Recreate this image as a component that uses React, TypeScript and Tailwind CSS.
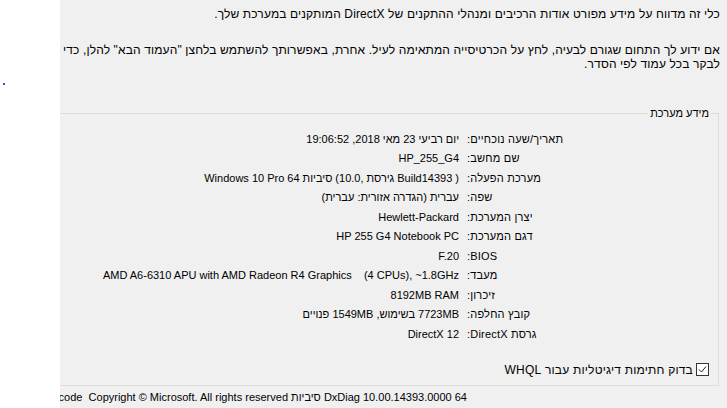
const rows: { label: string; value: React.ReactNode }[] = [
  { label: "תאריך/שעה נוכחיים:", value: "יום רביעי 23 מאי 2018, 19:06:52" },
  { label: "שם מחשב:", value: "HP_255_G4" },
  {
    label: "מערכת הפעלה:",
    value: (
      <span dir="ltr" className="inline-flex gap-[3px]">
        <span>Windows 10 Pro 64</span>
        <span>סיביות</span>
        <span>(10.0,</span>
        <span>גירסת</span>
        <span>Build14393</span>
        <span>)</span>
      </span>
    ),
  },
  { label: "שפה:", value: "עברית (הגדרה אזורית: עברית)" },
  { label: "יצרן המערכת:", value: "Hewlett-Packard" },
  { label: "דגם המערכת:", value: "HP 255 G4 Notebook PC" },
  { label: "BIOS:", value: "F.20" },
  { label: "מעבד:", value: "AMD A6-6310 APU with AMD Radeon R4 Graphics    (4 CPUs), ~1.8GHz" },
  { label: "זיכרון:", value: "8192MB RAM" },
  { label: "קובץ החלפה:", value: "7723MB בשימוש, 1549MB פנויים" },
  { label: "גרסת DirectX:", value: "DirectX 12" },
];

export default function App() {
  return (
    <div
      className="flex h-[408px] w-[727px] overflow-hidden bg-white text-[11px] text-black"
      style={{ fontFamily: '"Liberation Sans", "DejaVu Sans", sans-serif' }}
    >
      {/* white strip on the left */}
      <div className="w-[60px] shrink-0 pl-[3px] pt-[83px]">
        <div className="h-[2px] w-[2px] bg-[#3344ff]" />
      </div>

      <div dir="rtl" className="min-w-0 flex-1 overflow-hidden bg-[#f0f0f0]">
        <div className="whitespace-nowrap pr-[7px] pt-[7px] text-[12px] leading-[14px] tracking-[0.13px]">
          <p>כלי זה מדווח על מידע מפורט אודות הרכיבים ומנהלי ההתקנים של DirectX המותקנים במערכת שלך.</p>
          <p className="mt-[22px]">
            אם ידוע לך התחום שגורם לבעיה, לחץ על הכרטיסייה המתאימה לעיל. אחרת, באפשרותך להשתמש בלחצן "העמוד הבא" להלן, כדי
            <br />
            לבקר בכל עמוד לפי הסדר.
          </p>
        </div>

        {/* group box */}
        <div className="relative -ml-[30px] mr-[8px] mt-[42px] h-[273px] border border-[#dcdcdc]">
          <span className="absolute -top-[8px] right-[7px] bg-[#f0f0f0] px-[2px] leading-[14px]">מידע מערכת</span>

          <div className="pr-[143px] pt-[15px]">
            {rows.map((r) => (
              <div key={r.label} className="flex h-[19.5px] items-center whitespace-pre leading-[14px]">
                <div className="w-[108px] shrink-0 text-left tracking-[0.2px]">{r.label}</div>
                <div className="mr-[8px]">{r.value}</div>
              </div>
            ))}
          </div>

          <div className="mt-[19px] flex items-center gap-[3px] pr-[9px] leading-[14px]">
            <span className="flex h-[13px] w-[13px] items-center justify-center border border-[#333] bg-white">
              <svg viewBox="0 0 11 11" className="h-[11px] w-[11px]">
                <path d="M2 5.5 L4.5 8 L9 2.5" fill="none" stroke="#222" strokeWidth="1" />
              </svg>
            </span>
            <span className="text-[12px] tracking-[0.2px]">בדוק חתימות דיגיטליות עבור WHQL</span>
          </div>
        </div>

        <div className="mt-[4px] whitespace-pre pr-[260px] leading-[14px]">
          DxDiag 10.00.14393.0000 64 סיביות Unicode  Copyright © Microsoft. All rights reserved.
        </div>
      </div>
    </div>
  );
}
